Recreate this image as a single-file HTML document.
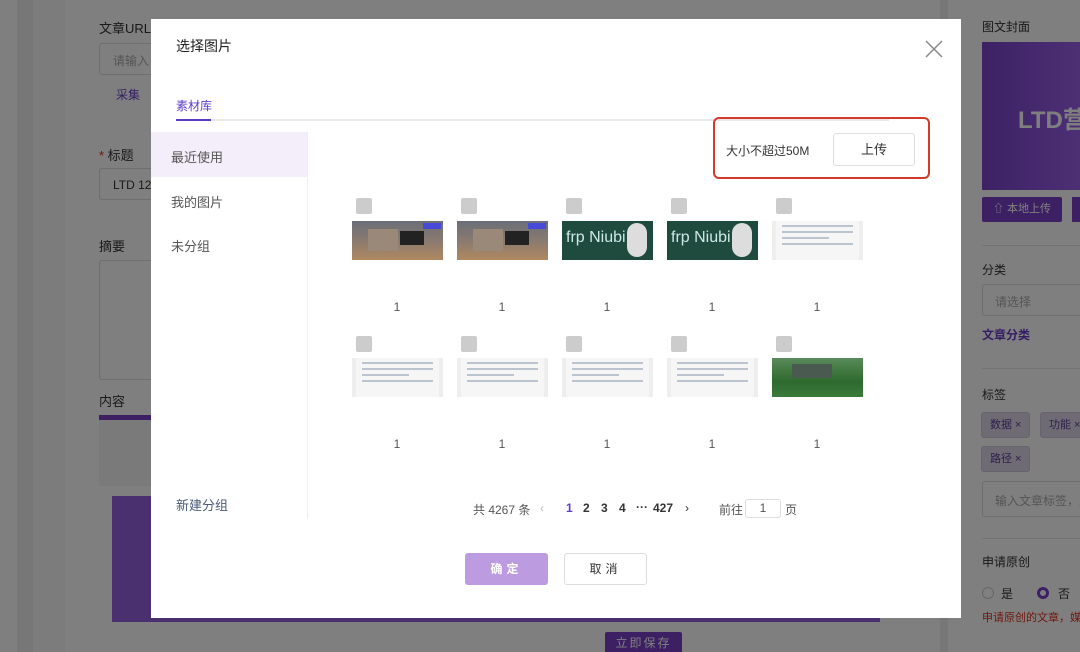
<!DOCTYPE html>
<html><head><meta charset="utf-8"><style>
*{box-sizing:border-box;margin:0;padding:0}
html,body{width:1080px;height:652px;overflow:hidden}
body{background:#fff;font-family:"Liberation Sans","Noto Sans CJK SC",sans-serif;position:relative;color:#333}
.a{position:absolute}
.t{font-size:12px;color:#333}
.inp{border:1px solid #ddd;border-radius:3px;background:#fff}
.cb{width:16px;height:16px;background:#ccc;border-radius:2px}
.n{font-size:12px;color:#555;width:90px;text-align:center}
.tag{background:#ddd6e8;border:1px solid #d0c8dc;border-radius:3px;font-size:11px;color:#5a3f98;height:26px;line-height:24px;padding:0 8px;white-space:nowrap}
.doc{background:#f6f6f6;border-left:4px solid #eee;border-right:4px solid #eee}
.doc i{display:block;height:2px;background:#bcc4d0;margin:4px 6px 0}
.ov{left:0;top:0;width:1080px;height:652px;background:rgba(0,0,0,0.5)}
</style></head><body>
<div class="a" style="left:0;top:0;width:1080px;height:652px;background:#fff"></div>
<div class="a" style="left:17px;top:0;width:16px;height:652px;background:#eee"></div>
<div class="a" style="left:33px;top:0;width:32px;height:652px;background:#f8f8f8"></div>
<div class="a" style="left:940px;top:0;width:8px;height:652px;background:#eee"></div>
<div class="a t" style="left:99px;top:18px;font-size:13px">文章URL</div>
<div class="a inp" style="left:99px;top:43px;width:60px;height:32px"></div>
<div class="a" style="left:113px;top:52px;font-size:12px;color:#aaa">请输入</div>
<div class="a" style="left:116px;top:86px;font-size:12px;color:#6a3ec8">采集</div>
<div class="a t" style="left:99px;top:145px;font-size:13px"><span style="color:#e03020">*</span> 标题</div>
<div class="a inp" style="left:99px;top:168px;width:60px;height:32px"></div>
<div class="a t" style="left:113px;top:178px">LTD 12</div>
<div class="a t" style="left:99px;top:236px;font-size:13px">摘要</div>
<div class="a inp" style="left:99px;top:260px;width:60px;height:120px"></div>
<div class="a t" style="left:99px;top:391px;font-size:13px">内容</div>
<div class="a" style="left:99px;top:415px;width:60px;height:5px;background:#7a3ec8"></div>
<div class="a" style="left:99px;top:420px;width:60px;height:66px;background:#f4f4f4"></div>
<div class="a" style="left:112px;top:496px;width:768px;height:126px;background:#9560dc"></div>
<div class="a" style="left:605px;top:632px;width:77px;height:22px;background:#7a3ec8;color:#fff;font-size:12px;text-align:center;line-height:22px;border-radius:2px;letter-spacing:2px">立即保存</div>
<div class="a t" style="left:982px;top:18px">图文封面</div>
<div class="a" style="left:982px;top:42px;width:98px;height:148px;background:linear-gradient(90deg,#7a44cc,#9a5ee8)"></div>
<div class="a" style="left:1018px;top:100px;font-size:24px;color:#fff;font-weight:bold;white-space:nowrap">LTD营销</div>
<div class="a" style="left:982px;top:197px;width:80px;height:25px;background:#7a3ec8;color:#fff;font-size:11px;text-align:center;line-height:25px;border-radius:2px">⇧ 本地上传</div>
<div class="a" style="left:1072px;top:197px;width:10px;height:25px;background:#7a3ec8"></div>
<div class="a" style="left:982px;top:245px;width:98px;height:1px;background:#e6e6e6"></div>
<div class="a t" style="left:982px;top:261px">分类</div>
<div class="a inp" style="left:982px;top:284px;width:100px;height:32px"></div>
<div class="a" style="left:995px;top:293px;font-size:12px;color:#aaa">请选择</div>
<div class="a" style="left:982px;top:326px;font-size:12px;color:#6a3ec8;font-weight:bold">文章分类</div>
<div class="a" style="left:982px;top:368px;width:98px;height:1px;background:#e6e6e6"></div>
<div class="a t" style="left:982px;top:386px">标签</div>
<div class="a tag" style="left:981px;top:412px">数据 ×</div>
<div class="a tag" style="left:1040px;top:412px;width:60px">功能 ×</div>
<div class="a tag" style="left:981px;top:446px">路径 ×</div>
<div class="a inp" style="left:982px;top:481px;width:100px;height:36px;overflow:hidden"><div style="margin:10px 0 0 12px;font-size:12px;color:#aaa;white-space:nowrap">输入文章标签，用</div></div>
<div class="a" style="left:982px;top:538px;width:98px;height:1px;background:#e6e6e6"></div>
<div class="a t" style="left:982px;top:553px">申请原创</div>
<div class="a" style="left:982px;top:587px;width:12px;height:12px;border:1px solid #ccc;border-radius:50%"></div>
<div class="a t" style="left:1001px;top:585px">是</div>
<div class="a" style="left:1037px;top:587px;width:12px;height:12px;border:3px solid #7a3ec8;border-radius:50%;background:#fff"></div>
<div class="a t" style="left:1058px;top:585px">否</div>
<div class="a" style="left:982px;top:609px;font-size:11px;color:#e03020;white-space:nowrap">申请原创的文章，媒体</div>
<div class="a ov"></div>
<!-- modal -->
<div class="a" style="left:151px;top:19px;width:810px;height:599px;background:#fff">
 <div class="a" style="left:25px;top:17px;font-size:14px;color:#222">选择图片</div>
 <svg class="a" style="left:774px;top:21px" width="18" height="18"><path d="M1 1L17 17M17 1L1 17" stroke="#888" stroke-width="1.5"/></svg>
 <div class="a" style="left:25px;top:78px;font-size:12px;color:#5b3fc8">素材库</div>
 <div class="a" style="left:25px;top:100px;width:713px;height:2px;background:#e8e8ee"></div>
 <div class="a" style="left:25px;top:100px;width:35px;height:2px;background:#5b3fc8"></div>
 <div class="a" style="left:0;top:113px;width:156px;height:45px;background:#f3eef9"></div>
 <div class="a" style="left:156px;top:113px;width:1px;height:387px;background:#eee"></div>
 <div class="a" style="left:20px;top:128px;font-size:13px;color:#555">最近使用</div>
 <div class="a" style="left:20px;top:173px;font-size:13px;color:#555">我的图片</div>
 <div class="a" style="left:20px;top:217px;font-size:13px;color:#555">未分组</div>
 <div class="a" style="left:25px;top:476px;font-size:13px;color:#4a5a78">新建分组</div>
 <div class="a" style="left:562px;top:98px;width:217px;height:62px;border:2px solid #d23a2c;border-radius:6px"></div>
 <div class="a" style="left:575px;top:123px;font-size:12px;color:#333">大小不超过50M</div>
 <div class="a" style="left:682px;top:114px;width:82px;height:33px;border:1px solid #ddd;border-radius:3px;font-size:13px;text-align:center;line-height:31px;color:#333">上传</div>
</div>
<div class="a cb" style="left:356px;top:198px"></div><div class="a cb" style="left:461px;top:198px"></div><div class="a cb" style="left:566px;top:198px"></div><div class="a cb" style="left:671px;top:198px"></div><div class="a cb" style="left:776px;top:198px"></div>
<div class="a" style="left:352px;top:221px;width:91px;height:39px;background:linear-gradient(180deg,#6a6e78 0%,#8a7a70 50%,#b08860 100%)"><div style="position:absolute;right:2px;top:2px;width:18px;height:6px;background:#4a4ad8"></div><div style="position:absolute;left:16px;top:8px;width:30px;height:22px;background:#9a8878"></div><div style="position:absolute;left:48px;top:10px;width:24px;height:14px;background:#222"></div></div>
<div class="a" style="left:457px;top:221px;width:91px;height:39px;background:linear-gradient(180deg,#6a6e78 0%,#8a7a70 50%,#b08860 100%)"><div style="position:absolute;right:2px;top:2px;width:18px;height:6px;background:#4a4ad8"></div><div style="position:absolute;left:16px;top:8px;width:30px;height:22px;background:#9a8878"></div><div style="position:absolute;left:48px;top:10px;width:24px;height:14px;background:#222"></div></div>
<div class="a" style="left:562px;top:221px;width:91px;height:39px;background:#1f4a3e;overflow:hidden"><span style="position:absolute;left:4px;top:8px;font-size:16px;color:#cfe8e8;white-space:nowrap">frp Niubi</span><div style="position:absolute;right:6px;top:2px;width:20px;height:34px;background:#ddd;border-radius:10px"></div></div>
<div class="a" style="left:667px;top:221px;width:91px;height:39px;background:#1f4a3e;overflow:hidden"><span style="position:absolute;left:4px;top:8px;font-size:16px;color:#cfe8e8;white-space:nowrap">frp Niubi</span><div style="position:absolute;right:6px;top:2px;width:20px;height:34px;background:#ddd;border-radius:10px"></div></div>
<div class="a doc" style="left:772px;top:221px;width:91px;height:39px"><i></i><i></i><i style="margin-right:30px"></i><i></i></div>
<div class="a n" style="left:352px;top:300px">1</div><div class="a n" style="left:457px;top:300px">1</div><div class="a n" style="left:562px;top:300px">1</div><div class="a n" style="left:667px;top:300px">1</div><div class="a n" style="left:772px;top:300px">1</div>
<div class="a cb" style="left:356px;top:336px"></div><div class="a cb" style="left:461px;top:336px"></div><div class="a cb" style="left:566px;top:336px"></div><div class="a cb" style="left:671px;top:336px"></div><div class="a cb" style="left:776px;top:336px"></div>
<div class="a doc" style="left:352px;top:358px;width:91px;height:39px"><i></i><i></i><i style="margin-right:30px"></i><i></i></div>
<div class="a doc" style="left:457px;top:358px;width:91px;height:39px"><i></i><i></i><i style="margin-right:30px"></i><i></i></div>
<div class="a doc" style="left:562px;top:358px;width:91px;height:39px"><i></i><i></i><i style="margin-right:30px"></i><i></i></div>
<div class="a doc" style="left:667px;top:358px;width:91px;height:39px"><i></i><i></i><i style="margin-right:30px"></i><i></i></div>
<div class="a" style="left:772px;top:358px;width:91px;height:39px;background:linear-gradient(180deg,#5a8a5a,#2e6a2e 60%,#3a7a3a)"><div style="position:absolute;left:20px;top:6px;width:40px;height:14px;background:#4a5a50"></div></div>
<div class="a n" style="left:352px;top:437px">1</div><div class="a n" style="left:457px;top:437px">1</div><div class="a n" style="left:562px;top:437px">1</div><div class="a n" style="left:667px;top:437px">1</div><div class="a n" style="left:772px;top:437px">1</div>
<div class="a" style="left:473px;top:501px;font-size:12px;color:#555">共 4267 条</div>
<div class="a" style="left:540px;top:501px;font-size:12px;color:#bbb">‹</div>
<div class="a" style="left:566px;top:501px;font-size:12px;color:#5b3fc8;font-weight:bold">1</div>
<div class="a" style="left:583px;top:501px;font-size:12px;color:#333;font-weight:bold">2</div>
<div class="a" style="left:601px;top:501px;font-size:12px;color:#333;font-weight:bold">3</div>
<div class="a" style="left:619px;top:501px;font-size:12px;color:#333;font-weight:bold">4</div>
<div class="a" style="left:636px;top:500px;font-size:12px;color:#333;font-weight:bold">···</div>
<div class="a" style="left:653px;top:501px;font-size:12px;color:#333;font-weight:bold">427</div>
<div class="a" style="left:685px;top:501px;font-size:12px;color:#333">›</div>
<div class="a" style="left:719px;top:501px;font-size:12px;color:#555">前往</div>
<div class="a" style="left:745px;top:499px;width:36px;height:19px;border:1px solid #ddd;border-radius:3px;font-size:12px;text-align:center;line-height:17px;color:#555">1</div>
<div class="a" style="left:785px;top:501px;font-size:12px;color:#555">页</div>
<div class="a" style="left:465px;top:553px;width:83px;height:32px;background:#bd9be0;border-radius:3px;color:#fff;font-size:12px;text-align:center;line-height:32px;letter-spacing:4px;font-weight:bold">确定</div>
<div class="a" style="left:564px;top:553px;width:83px;height:32px;border:1px solid #ddd;border-radius:3px;color:#333;font-size:12px;text-align:center;line-height:30px;letter-spacing:4px;background:#fff">取消</div>
</body></html>
